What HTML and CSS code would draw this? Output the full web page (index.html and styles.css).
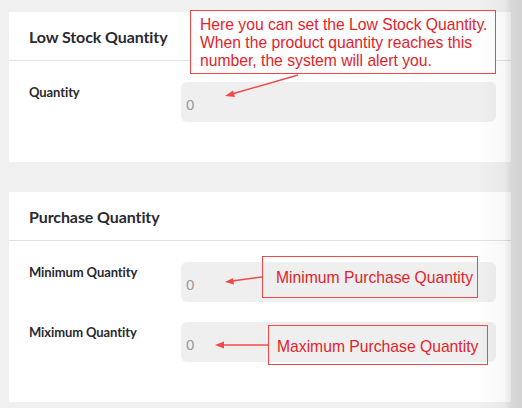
FILE: index.html
```html
<!DOCTYPE html>
<html>
<head>
<meta charset="utf-8">
<link rel="stylesheet" href="styles.css">
</head>
<body>
<div class="page">
  <section class="card">
    <div class="card-head"><h2>Low Stock Quantity</h2></div>
    <div class="card-body">
      <div class="row">
        <label class="label">Quantity</label>
        <div class="field"><span class="ph">0</span></div>
      </div>
    </div>
  </section>
  <section class="card">
    <div class="card-head"><h2>Purchase Quantity</h2></div>
    <div class="card-body">
      <div class="row">
        <label class="label">Minimum Quantity</label>
        <div class="field"><span class="ph">0</span></div>
      </div>
      <div class="row">
        <label class="label">Miximum Quantity</label>
        <div class="field"><span class="ph">0</span></div>
      </div>
    </div>
  </section>

  <div class="note note-low">Here you can set the Low Stock Quantity.<br>When the product quantity reaches this<br>number, the system will alert you.</div>
  <div class="note note-min">Minimum Purchase Quantity</div>
  <div class="note note-max">Maximum Purchase Quantity</div>

  <svg class="arrows" width="522" height="408" viewBox="0 0 522 408">
    <g stroke="#f44848" stroke-width="1.4" fill="none">
      <line x1="298" y1="75" x2="232" y2="94"/>
      <line x1="262" y1="277" x2="232" y2="281"/>
      <line x1="268" y1="345" x2="222" y2="345"/>
    </g>
    <g fill="#f44848">
      <polygon points="225,96 233,90.5 235,97"/>
      <polygon points="225,282 233,278 234,284.5"/>
      <polygon points="215,345 224,341.5 224,348.5"/>
    </g>
  </svg>
  <div class="edge-shade"></div>
</div>
</body>
</html>
```
FILE: styles.css
```css
html, body {
  margin: 0;
  padding: 0;
  background: #f0f0f0;
}
.page {
  position: relative;
  width: 522px;
  height: 408px;
  overflow: hidden;
  padding-top: 12px;
  box-sizing: border-box;
  font-family: Lato, "Open Sans", sans-serif;
}
.card {
  background: #fff;
  margin-left: 9px;
  width: 502px;
  margin-bottom: 30px;
}
.card-head {
  height: 48px;
  border-bottom: 1px solid #e2e2e2;
  display: flex;
  align-items: center;
  padding-left: 20px;
}
.card-head h2 {
  margin: 0;
  font-size: 16px;
  font-weight: 700;
  color: #2a2a30;
  letter-spacing: -0.1px;
}
.card-body {
  padding: 21px 15px 40px 20px;
  display: flex;
  flex-direction: column;
  gap: 20px;
}
.row {
  display: flex;
  align-items: flex-start;
}
.label {
  width: 152px;
  flex: none;
  font-size: 13px;
  font-weight: 700;
  color: #2a2a30;
  padding-top: 2px;
  letter-spacing: -0.1px;
}
.field {
  flex: 1;
  height: 40px;
  background: #efefef;
  border-radius: 6px;
  display: flex;
  align-items: center;
  padding-left: 5px;
}
.ph {
  font-family: "Liberation Sans", Arial, sans-serif;
  font-size: 15px;
  color: #9a9a9a;
  padding-top: 5px;
}
.note {
  position: absolute;
  box-sizing: border-box;
  border: 1.5px solid #f44848;
  color: #e3232a;
  font-family: "Liberation Sans", Arial, sans-serif;
  font-size: 15.7px;
  line-height: 18px;
  white-space: nowrap;
}
.note-low {
  left: 190px;
  top: 10px;
  width: 306px;
  height: 64px;
  background: #fff;
  padding: 5px 0 0 9px;
}
.note-min {
  left: 262px;
  top: 256px;
  width: 216px;
  height: 42px;
  padding: 12px 0 0 13px;
}
.note-max {
  left: 268px;
  top: 325px;
  width: 220px;
  height: 40px;
  padding: 12px 0 0 8px;
}
.arrows {
  position: absolute;
  left: 0;
  top: 0;
}
.edge-shade {
  position: absolute;
  right: 0;
  top: 0;
  width: 44px;
  height: 408px;
  background: linear-gradient(to right, rgba(0,0,0,0), rgba(0,0,0,0.03) 60%, rgba(0,0,0,0.1) 75%, rgba(0,0,0,0.12));
  pointer-events: none;
}
```
